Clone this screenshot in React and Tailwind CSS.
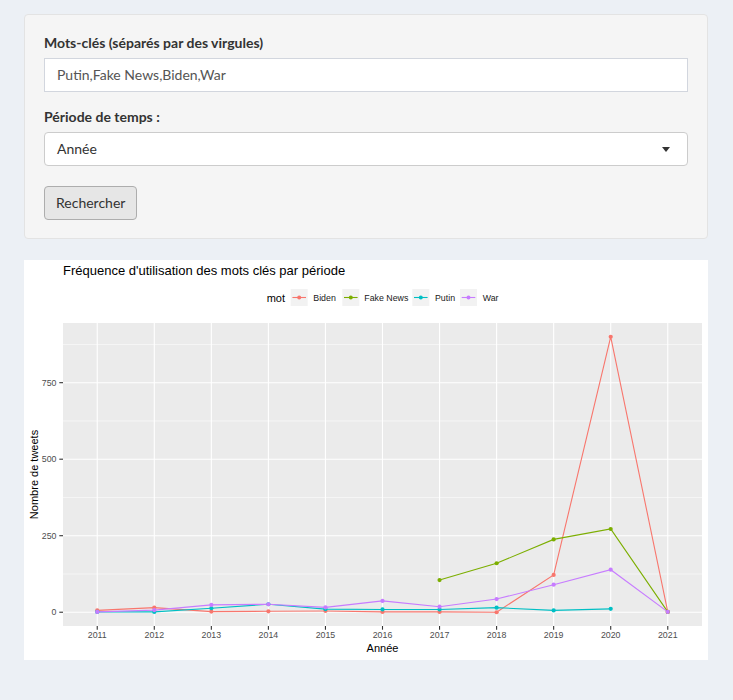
import React from "react";

const COLORS = { Biden: "#F8766D", "Fake News": "#7CAE00", Putin: "#00BFC4", War: "#C77CFF" };
const DATA = {
  Biden: [6, 15, 2, 3, 4, 1, 1, 0, 122, 900, 1],
  "Fake News": [null, null, null, null, null, null, 105, 160, 238, 272, 1],
  Putin: [1, 1, 13, 26, 10, 9, 9, 15, 6, 11, null],
  War: [1, 7, 24, 26, 16, 37, 18, 43, 90, 139, 1],
};
const YEARS = [2011, 2012, 2013, 2014, 2015, 2016, 2017, 2018, 2019, 2020, 2021];
const PL = 39, PR = 678, PT = 63, PB = 366;
const X = (i) => PL + (0.6 + i) * (PR - PL) / 11.2;
const Y = (v) => PT + (945 - v) * (PB - PT) / 990;

function Chart() {
  const font = "'Liberation Sans', Arial, sans-serif";
  const series = Object.keys(DATA);
  const legend = [
    { k: "Biden", kx: 266.7, tx: 289.3 },
    { k: "Fake News", kx: 318.3, tx: 340.3 },
    { k: "Putin", kx: 388.3, tx: 411 },
    { k: "War", kx: 436, tx: 458.7 },
  ];
  return (
    <svg width="684" height="400" viewBox="0 0 684 400" style={{ fontFamily: font, display: "block" }}>
      <rect x="0" y="0" width="684" height="400" fill="#ffffff" />
      <text x="39" y="15" fontSize="13" fill="#000">Fréquence d'utilisation des mots clés par période</text>
      <text x="242.7" y="42" fontSize="11" fill="#000">mot</text>
      {legend.map((l) => (
        <g key={l.k}>
          <rect x={l.kx} y="29" width="17" height="17" fill="#f2f2f2" />
          <line x1={l.kx + 1.7} x2={l.kx + 15.3} y1="37.5" y2="37.5" stroke={COLORS[l.k]} strokeWidth="1.1" />
          <circle cx={l.kx + 8.5} cy="37.5" r="2" fill={COLORS[l.k]} />
          <text x={l.tx} y="40.8" fontSize="8.8" fill="#1a1a1a">{l.k}</text>
        </g>
      ))}
      <rect x={PL} y={PT} width={PR - PL} height={PB - PT} fill="#ebebeb" />
      {[125, 375, 625, 875].map((v) => (
        <line key={"m" + v} x1={PL} x2={PR} y1={Y(v)} y2={Y(v)} stroke="#ffffff" strokeWidth="0.55" />
      ))}
      {[0, 250, 500, 750].map((v) => (
        <line key={"M" + v} x1={PL} x2={PR} y1={Y(v)} y2={Y(v)} stroke="#ffffff" strokeWidth="1.1" />
      ))}
      {YEARS.map((y, i) => (
        <line key={"x" + y} x1={X(i)} x2={X(i)} y1={PT} y2={PB} stroke="#ffffff" strokeWidth="1.1" />
      ))}
      {series.map((s) => {
        const pts = DATA[s].map((v, i) => (v == null ? null : [X(i), Y(v)])).filter(Boolean);
        return (
          <polyline
            key={"l" + s}
            points={pts.map((p) => p.join(",")).join(" ")}
            fill="none"
            stroke={COLORS[s]}
            strokeWidth="1.1"
          />
        );
      })}
      {series.map((s) =>
        DATA[s].map((v, i) =>
          v == null ? null : <circle key={s + i} cx={X(i)} cy={Y(v)} r="2.1" fill={COLORS[s]} />
        )
      )}
      {[0, 250, 500, 750].map((v) => (
        <g key={"yt" + v}>
          <line x1={PL - 3.7} x2={PL} y1={Y(v)} y2={Y(v)} stroke="#333333" strokeWidth="1.1" />
          <text x={PL - 6.5} y={Y(v) + 3.2} fontSize="8.8" fill="#4d4d4d" textAnchor="end">{v}</text>
        </g>
      ))}
      {YEARS.map((y, i) => (
        <g key={"xt" + y}>
          <line x1={X(i)} x2={X(i)} y1={PB} y2={PB + 3.7} stroke="#333333" strokeWidth="1.1" />
          <text x={X(i)} y="378" fontSize="8.8" fill="#4d4d4d" textAnchor="middle">{y}</text>
        </g>
      ))}
      <text x={(PL + PR) / 2} y="392" fontSize="11" fill="#000" textAnchor="middle">Année</text>
      <text
        transform={`translate(13.5 ${(PT + PB) / 2}) rotate(-90)`}
        fontSize="11"
        fill="#000"
        textAnchor="middle"
      >
        Nombre de tweets
      </text>
    </svg>
  );
}

export default function App() {
  return (
    <div
      className="min-h-[700px] bg-[#ecf0f5] pt-[14px]"
      style={{ fontFamily: "Lato, 'Open Sans', sans-serif" }}
    >
      <div className="ml-[24px] w-[684px] rounded border border-[#e3e3e3] bg-[#f5f5f5] px-[19px] pt-[18px] pb-[18px] text-[14px] leading-[20px] text-[#333]">
        <div className="mb-[15px]">
          <label className="mb-[5px] block font-bold">Mots-clés (séparés par des virgules)</label>
          <div className="flex h-[34px] items-center border border-[#d2d6de] bg-white px-[12px] text-[#555]">
            Putin,Fake News,Biden,War
          </div>
        </div>
        <div className="mb-[20px]">
          <label className="mb-[5px] block font-bold">Période de temps :</label>
          <div className="flex h-[34px] items-center justify-between rounded border border-[#cccccc] bg-white pl-[12px] pr-[17px] text-[#333]">
            <span>Année</span>
            <span className="h-0 w-0 border-x-[4px] border-t-[5px] border-x-transparent border-t-[#333]" />
          </div>
        </div>
        <button className="h-[34px] rounded border border-[#adadad] bg-[#e6e6e6] px-[11px] text-[#333]">
          Rechercher
        </button>
      </div>
      <div className="ml-[24px] mt-[21px] w-[684px]">
        <Chart />
      </div>
    </div>
  );
}
